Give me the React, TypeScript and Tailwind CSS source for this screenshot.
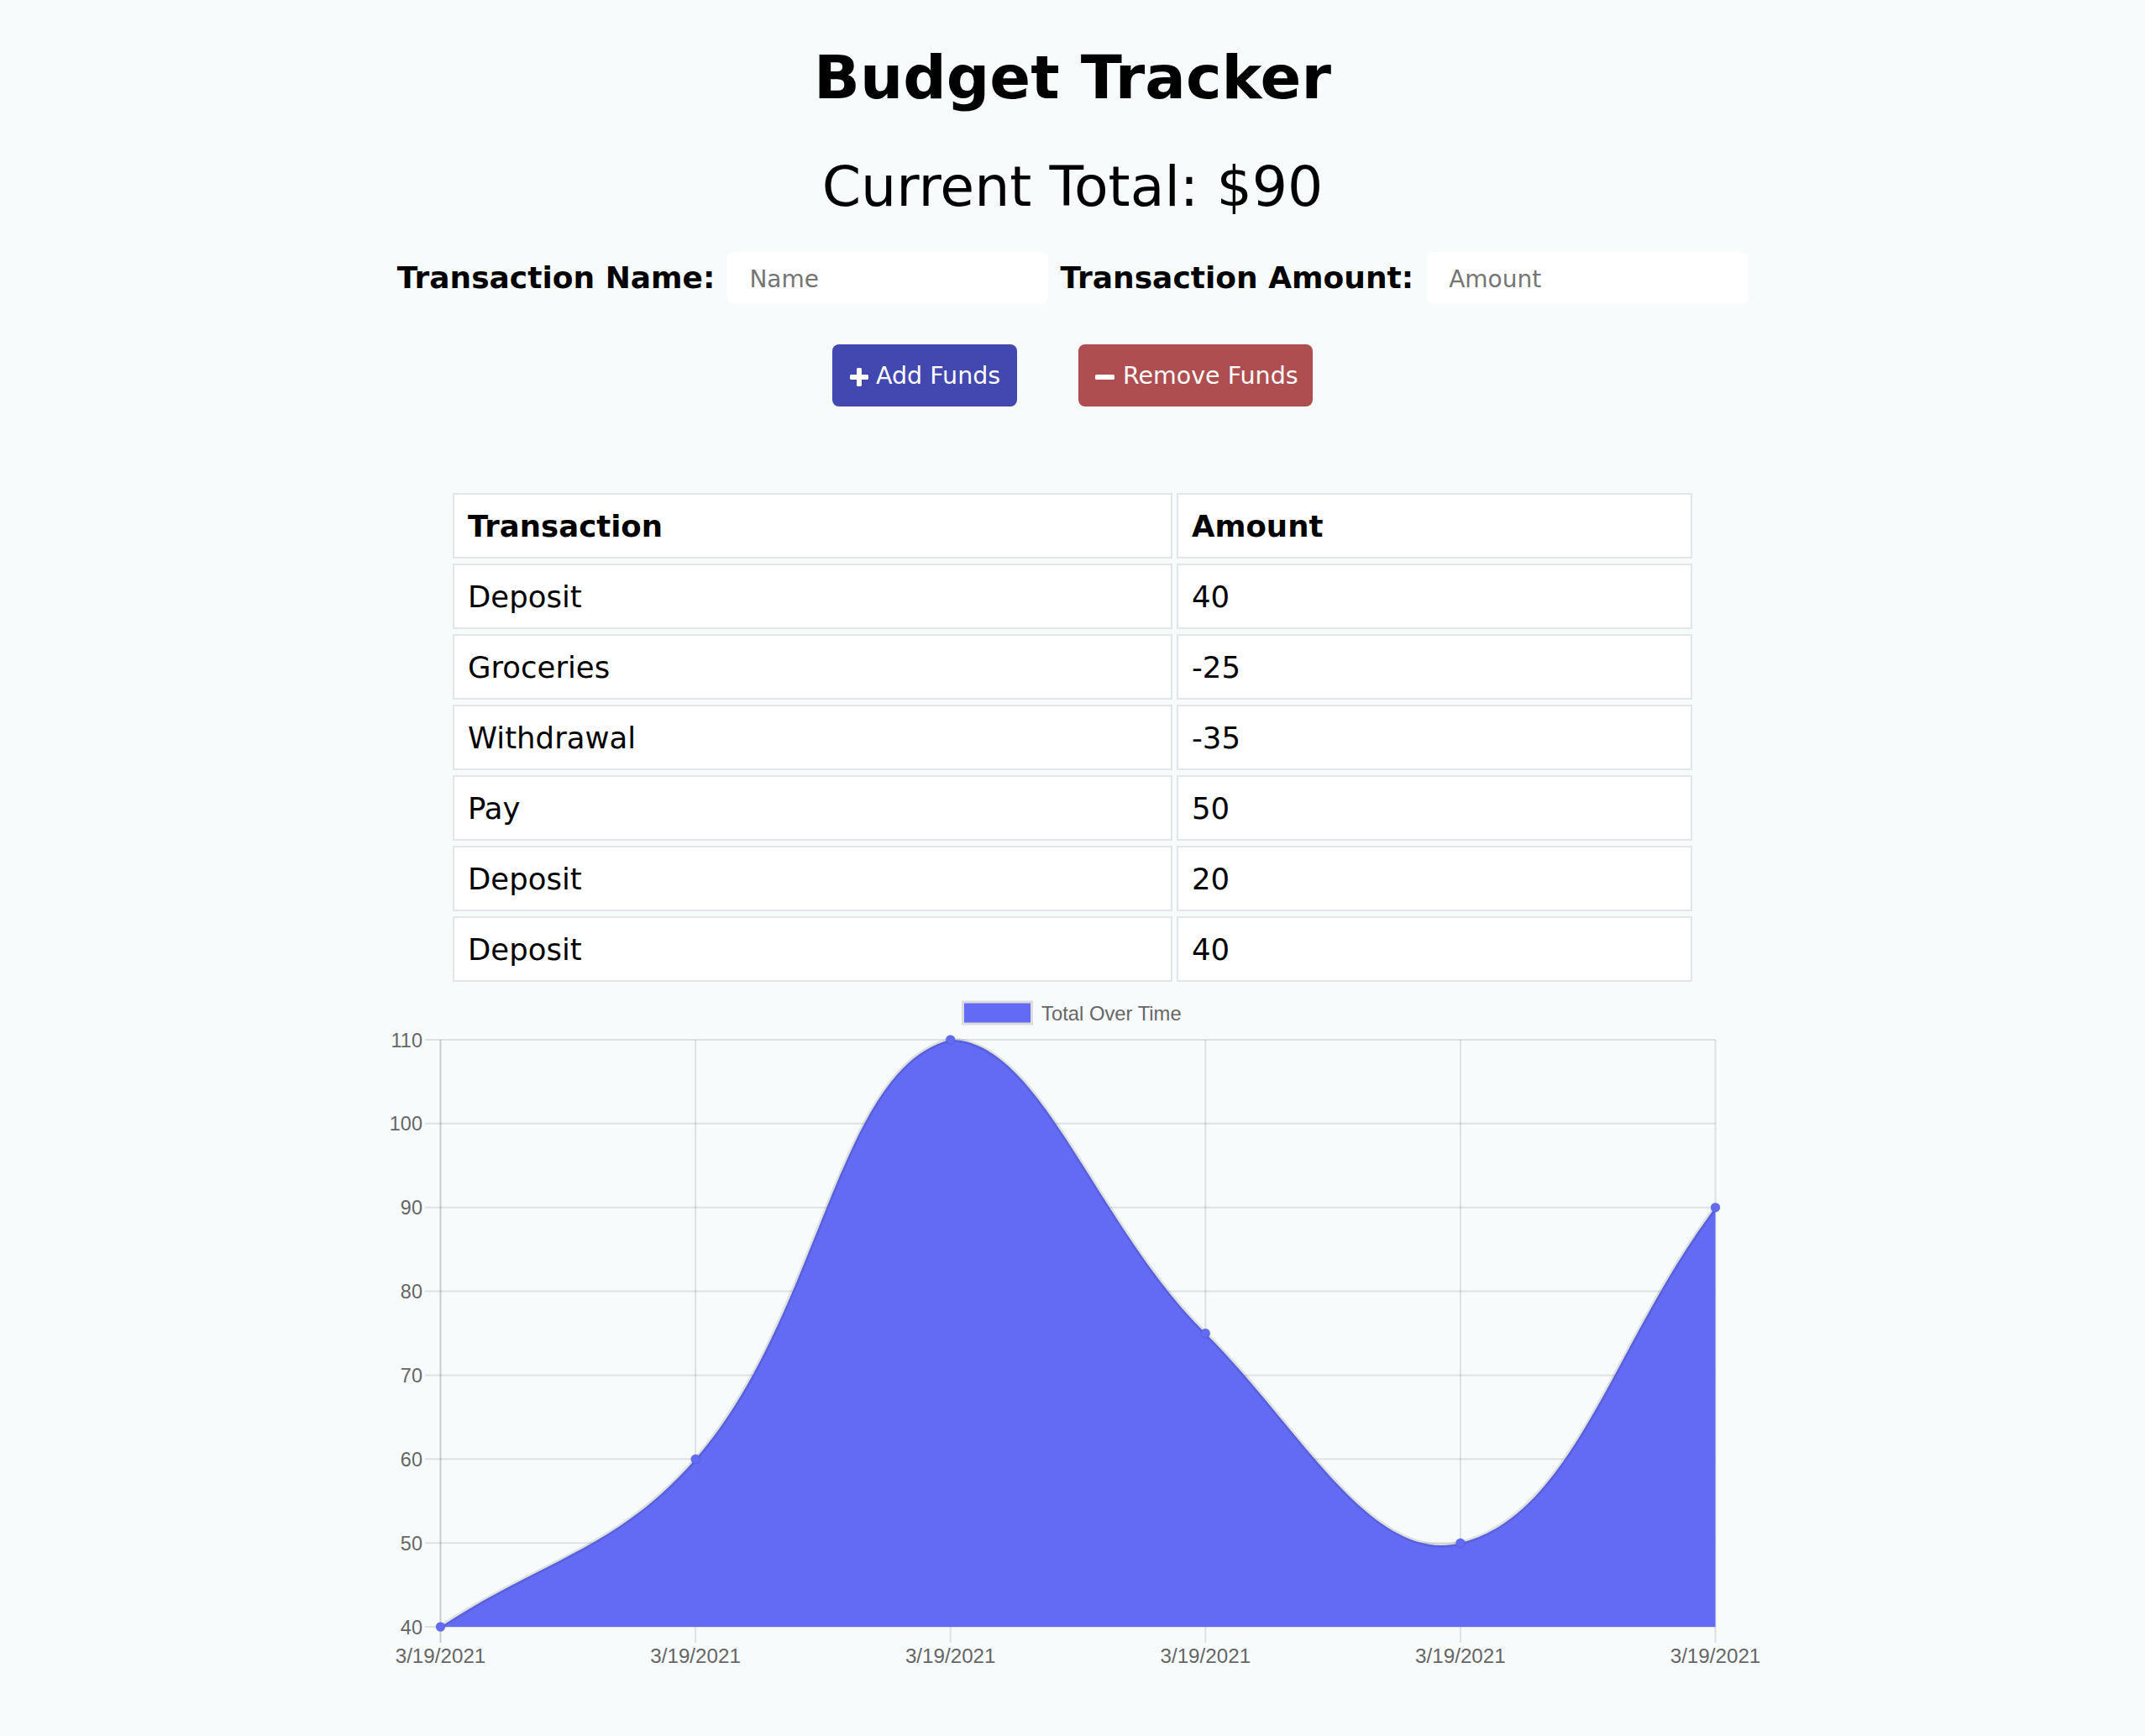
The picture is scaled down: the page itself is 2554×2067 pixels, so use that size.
import React from "react";

const rows = [
  { name: "Deposit", amount: "40" },
  { name: "Groceries", amount: "-25" },
  { name: "Withdrawal", amount: "-35" },
  { name: "Pay", amount: "50" },
  { name: "Deposit", amount: "20" },
  { name: "Deposit", amount: "40" },
];

const totals = [40, 60, 110, 75, 50, 90];

// chart area in page pixels
const left = 524.5;
const right = 2042.5;
const top = 1239;
const bottom = 1938;
const yMin = 40;
const yMax = 110;

type Pt = { x: number; y: number };

function px(i: number) {
  return left + (i * (right - left)) / (totals.length - 1);
}
function py(v: number) {
  return bottom - ((v - yMin) / (yMax - yMin)) * (bottom - top);
}

// bezier like chart.js v2 (tension 0.4)
function buildPath(pts: Pt[]) {
  const t = 0.4;
  const ctrl = pts.map((cur, i) => {
    const prev = pts[i - 1] || cur;
    const next = pts[i + 1] || cur;
    const d01 = Math.hypot(cur.x - prev.x, cur.y - prev.y);
    const d12 = Math.hypot(next.x - cur.x, next.y - cur.y);
    let s01 = d01 / (d01 + d12);
    let s12 = d12 / (d01 + d12);
    s01 = isNaN(s01) ? 0 : s01;
    s12 = isNaN(s12) ? 0 : s12;
    const fa = t * s01;
    const fb = t * s12;
    const clampY = (y: number) => Math.min(Math.max(y, top), bottom);
    return {
      prev: { x: cur.x - fa * (next.x - prev.x), y: clampY(cur.y - fa * (next.y - prev.y)) },
      next: { x: cur.x + fb * (next.x - prev.x), y: clampY(cur.y + fb * (next.y - prev.y)) },
    };
  });
  let d = `M ${pts[0].x} ${pts[0].y}`;
  for (let i = 1; i < pts.length; i++) {
    const a = ctrl[i - 1].next;
    const b = ctrl[i].prev;
    d += ` C ${a.x} ${a.y} ${b.x} ${b.y} ${pts[i].x} ${pts[i].y}`;
  }
  return d;
}

function Chart() {
  const pts = totals.map((v, i) => ({ x: px(i), y: py(v) }));
  const line = buildPath(pts);
  const area = `${line} L ${right} ${bottom} L ${left} ${bottom} Z`;
  const ticks = [110, 100, 90, 80, 70, 60, 50, 40];

  return (
    <svg width={1700} height={824} viewBox="427 1176 1700 824" className="mt-[6px] block">
      {/* legend */}
      <rect x={1146.5} y={1194} width={82} height={26} fill="#636bf4" stroke="#dcdcdc" strokeWidth={3} />
      <text x={1240} y={1215.5} fontSize={23.8} fill="#666" fontFamily="'Liberation Sans', Arial, sans-serif">
        Total Over Time
      </text>

      {/* grid */}
      {ticks.map((v) => (
        <line key={v} x1={506} x2={right} y1={py(v)} y2={py(v)} stroke="rgba(0,0,0,0.1)" strokeWidth={2} />
      ))}
      {totals.map((_, i) => (
        <line
          key={i}
          x1={px(i)}
          x2={px(i)}
          y1={top}
          y2={1957}
          stroke={i === 0 ? "rgba(0,0,0,0.18)" : "rgba(0,0,0,0.1)"}
          strokeWidth={2}
        />
      ))}

      {/* data */}
      <path d={area} fill="#636bf4" />
      <path d={line} fill="none" stroke="rgba(0,0,0,0.1)" strokeWidth={5} />
      {pts.map((p, i) => (
        <circle key={i} cx={p.x} cy={p.y} r={5.5} fill="#636bf4" stroke="rgba(0,0,0,0.08)" strokeWidth={1.5} />
      ))}

      {/* y labels */}
      {ticks.map((v) => (
        <text
          key={v}
          x={503}
          y={py(v) + 8.5}
          textAnchor="end"
          fontSize={23.5}
          fill="#666"
          fontFamily="'Liberation Sans', Arial, sans-serif"
        >
          {v}
        </text>
      ))}

      {/* x labels */}
      {totals.map((_, i) => (
        <text
          key={i}
          x={px(i)}
          y={1980.5}
          textAnchor="middle"
          fontSize={24.2}
          fill="#666"
          fontFamily="'Liberation Sans', Arial, sans-serif"
        >
          3/19/2021
        </text>
      ))}
    </svg>
  );
}

function PlusIcon() {
  return (
    <svg width={22} height={22} viewBox="0 0 22 22" className="shrink-0">
      <rect x={8} y={0} width={6} height={22} rx={1.5} fill="white" />
      <rect x={0} y={8} width={22} height={6} rx={1.5} fill="white" />
    </svg>
  );
}

function MinusIcon() {
  return (
    <svg width={23} height={22} viewBox="0 0 23 22" className="shrink-0">
      <rect x={0} y={8} width={23} height={6} rx={1.5} fill="white" />
    </svg>
  );
}

export default function App() {
  return (
    <div className="min-h-screen bg-[#f7fbfc] text-black font-['DejaVu_Sans',Verdana,sans-serif] flex flex-col items-center pt-[50px] pb-[60px]">
      {/* titulo */}
      <h1 className="text-[72px] leading-[84px] font-bold">Budget Tracker</h1>
      <h2 className="mt-[50px] text-[66.5px] leading-[77px]">Current Total: $90</h2>

      {/* formulario */}
      <div className="mt-[39px] flex items-center">
        <label className="text-[36px] font-bold">Transaction Name:</label>
        <input
          placeholder="Name"
          className="ml-[15px] w-[382px] h-[62px] rounded-[8px] bg-white px-[26px] pt-[2px] text-[28px] placeholder:text-[#757575] outline-none"
        />
        <label className="ml-[14px] text-[36px] font-bold">Transaction Amount:</label>
        <input
          placeholder="Amount"
          className="ml-[16px] w-[382px] h-[62px] rounded-[8px] bg-white px-[26px] pt-[2px] text-[28px] placeholder:text-[#757575] outline-none"
        />
      </div>

      {/* botones */}
      <div className="mt-[48px] flex gap-[73px]">
        <button className="w-[220px] h-[74px] rounded-[8px] bg-[#4347b0] text-white text-[28.5px] flex items-center gap-[9px] pl-[21px] pt-[3px]">
          <PlusIcon />
          Add Funds
        </button>
        <button className="w-[279px] h-[74px] rounded-[8px] bg-[#ae4e50] text-white text-[28.5px] flex items-center gap-[10px] pl-[20px] pt-[3px]">
          <MinusIcon />
          Remove Funds
        </button>
      </div>

      {/* tabla */}
      <div className="mt-[103px] grid grid-cols-[857px_614px] gap-x-[5px] gap-y-[6px]">
        <div className="h-[78px] border-2 border-[#e1e6eb] bg-white px-[16px] pt-[2px] flex items-center text-[35.5px] font-bold">
          Transaction
        </div>
        <div className="h-[78px] border-2 border-[#e1e6eb] bg-white px-[16px] pt-[2px] flex items-center text-[35.5px] font-bold">
          Amount
        </div>
        {rows.map((r, i) => (
          <React.Fragment key={i}>
            <div className="h-[78px] border-2 border-[#e1e6eb] bg-white px-[16px] pt-[2px] flex items-center text-[35.5px]">
              {r.name}
            </div>
            <div className="h-[78px] border-2 border-[#e1e6eb] bg-white px-[16px] pt-[2px] flex items-center text-[35.5px]">
              {r.amount}
            </div>
          </React.Fragment>
        ))}
      </div>

      <Chart />
    </div>
  );
}
